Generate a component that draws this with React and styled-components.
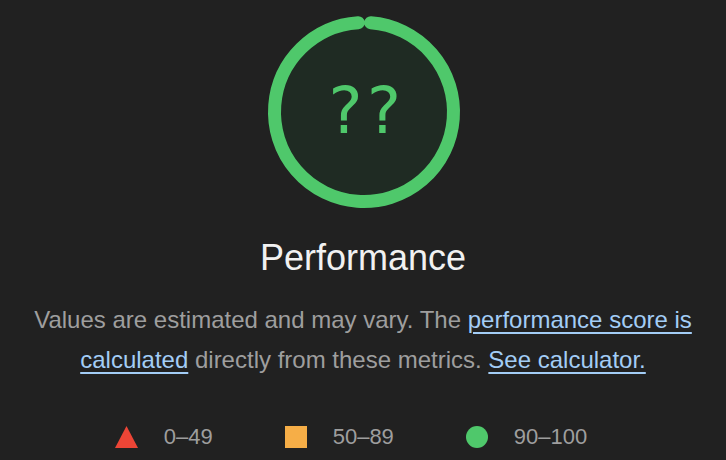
import React from "react";
import styled, { createGlobalStyle } from "styled-components";

// ----------- Global -----------
const GlobalStyle = createGlobalStyle`
  html, body {
    margin: 0;
    padding: 0;
    background: #212121;
  }
  body {
    font-family: "Liberation Sans", Arial, Helvetica, sans-serif;
    -webkit-font-smoothing: antialiased;
  }
`;

// ----------- Styled Components -----------
const Page = styled.div`
  width: 726px;
  height: 460px;
  display: flex;
  flex-direction: column;
  align-items: center;
  padding-top: 12px;
  box-sizing: border-box;
  overflow: hidden;
`;

const GaugeWrap = styled.div`
  position: relative;
  width: 200px;
  height: 200px;
  margin-left: 2px;
`;

const GaugeSvg = styled.svg`
  display: block;
  width: 200px;
  height: 200px;
`;

const GaugeValue = styled.div`
  position: absolute;
  inset: 0;
  display: flex;
  align-items: center;
  justify-content: center;
  font-family: "DejaVu Sans Mono", Menlo, monospace;
  font-size: 64px;
  color: #4fc86b;
  padding-bottom: 2px;
`;

const Title = styled.div`
  margin-top: 24px;
  font-size: 36px;
  line-height: 44px;
  color: #f1f1f1;
`;

const Description = styled.p`
  margin: 20px 0 0;
  max-width: 700px;
  text-align: center;
  font-size: 24px;
  line-height: 40px;
  color: #9e9e9e;
`;

const Link = styled.a`
  color: #a3cdf6;
  text-decoration: underline;
  text-decoration-thickness: 1.5px;
  text-underline-offset: 4px;
`;

const Legend = styled.div`
  margin-top: 45px;
  display: flex;
  align-items: center;
  gap: 72px;
  padding-right: 24px;
`;

const LegendItem = styled.div`
  display: flex;
  align-items: center;
  gap: 26px;
  font-size: 22px;
  line-height: 24px;
  color: #9e9e9e;
`;

const Square = styled.span`
  width: 22px;
  height: 22px;
  background: #f6ae47;
`;

const Dot = styled.span`
  width: 22px;
  height: 22px;
  border-radius: 50%;
  background: #4fc86b;
`;

function Triangle() {
  return (
    <svg width="23" height="22" viewBox="0 0 23 22">
      <polygon points="11.5,0 23,22 0,22" fill="#ec4536" />
    </svg>
  );
}

// ------------- Gauge ----------------
function Gauge({ value }) {
  const r = 89.5;
  const c = 2 * Math.PI * r;
  const gap = 13.5;
  const rot = -90 + ((gap / 2) / r) * (180 / Math.PI);
  return (
    <GaugeWrap>
      <GaugeSvg viewBox="0 0 200 200">
        <circle cx="100" cy="100" r={r} fill="#1f2b23" />
        <circle
          cx="100"
          cy="100"
          r={r}
          fill="none"
          stroke="#4fc86b"
          strokeWidth="13"
          strokeLinecap="round"
          strokeDasharray={`${c - gap} ${c}`}
          transform={`rotate(${rot} 100 100)`}
        />
      </GaugeSvg>
      <GaugeValue>{value}</GaugeValue>
    </GaugeWrap>
  );
}

// ------------- Main Page ----------------
export default function App() {
  return (
    <>
      <GlobalStyle />
      <Page>
        <Gauge value="??" />
        <Title>Performance</Title>
        <Description>
          Values are estimated and may vary. The{" "}
          <Link href="#">performance score is calculated</Link> directly from
          these metrics. <Link href="#">See calculator.</Link>
        </Description>
        <Legend>
          <LegendItem>
            <Triangle />
            0–49
          </LegendItem>
          <LegendItem>
            <Square />
            50–89
          </LegendItem>
          <LegendItem>
            <Dot />
            90–100
          </LegendItem>
        </Legend>
      </Page>
    </>
  );
}
